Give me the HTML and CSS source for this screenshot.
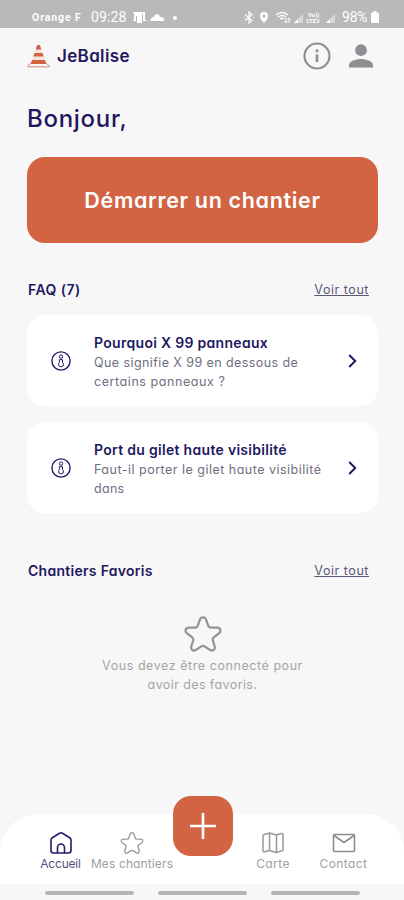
FILE: index.html
```html
<!DOCTYPE html>
<html lang="fr">
<head>
<meta charset="utf-8">
<title>JeBalise</title>
<link rel="stylesheet" href="styles.css">
</head>
<body>
<div class="app">
  <div class="status">
    <span class="carrier">Orange F</span>
    <span class="clock">09:28</span>
    <svg class="st-left" width="48" height="16" viewBox="0 0 48 16" fill="#fff"><path d="M0 3h12v8h1.500v1H10V5H9v9H4V7H3v5H0v-1h1V4H0z"/><path d="M18 12c-1-3 1-4 3-4 1-4 6-3 6 0 3 0 5 2 4 4z"/><circle cx="42" cy="9" r="2"/></svg>
    <svg class="st-right" width="96" height="16" viewBox="0 0 96 16" fill="none" stroke="#fff"><path d="M2 5.500l7 6-3 2.500V3l3 2.500-7 6M1 8.500h1M10 8.500h1" stroke-width="1.200"/><path d="M21 3a4 4 0 0 1 4 4c0 3-4 7-4 7s-4-4-4-7a4 4 0 0 1 4-4zm0 2.500a1.600 1.600 0 1 0 .1 0z" fill="#fff" fill-rule="evenodd" stroke="none"/><path d="M33 6q6-5 12 0M35 8q4-3 8 0M37 10q2-1.500 4 0" stroke-width="1.500"/><path d="M43 9v5m-1.500-1.500L43 14l1.500-1.500M46 14V9m-1 1.500L46 9l1.500 1.500"/><path d="M51 14l9-9v9zM83 14l9-9v9z" fill="#fff" stroke="none" opacity=".45"/><path d="M51 14l4-4v4zM83 14l4-4v4z" fill="#fff" stroke="none"/><g class="lte"><text x="65" y="8">Vo))</text><text x="63.500" y="14">LTE2</text></g></svg>
    <span class="batt">98%</span>
    <svg class="cell" width="8" height="12" viewBox="0 0 8 12" fill="#fff"><path d="M2.500 0h3v1.500H7q1 0 1 1V11q0 1-1 1H1q-1 0-1-1V2.500q0-1 1-1h1.500z"/></svg>
  </div>
  <header class="top">
    <svg class="cone" width="23" height="24" viewBox="0 0 23 24"><path d="M10 1.500q1.500-1.300 3 0L19.500 20h-16z" fill="#f6e4dc"/><path d="M10 1.500q1.500-1.300 3 0l1.300 4H8.700zM7.500 9h8l1.200 3.500H6.300zM5 16h13l1.300 4H3.700z" fill="#d26341"/><path d="M3.500 19.500L.8 21.800v1h21.400v-1l-2.700-2.300" fill="none" stroke="#cf8a77" stroke-width="1"/></svg>
    <span class="brand">JeBalise</span>
    <svg class="info" width="28" height="28" viewBox="0 0 28 28" fill="none" stroke="#8e8e93"><circle cx="14" cy="14" r="12.500" stroke-width="2.100"/><path d="M14 12.500v7.500M14 7.500v2.700" stroke-width="2.700"/></svg>
    <svg class="user" width="24" height="24" viewBox="0 0 24 24" fill="#8e8e93"><circle cx="12" cy="6.200" r="5.900"/><path d="M0 23.500v-2.300c0-4 7-6.200 12-6.200s12 2.200 12 6.200v2.300z"/></svg>
  </header>
  <main>
    <h1><span class="t-hello">Bonjour,</span></h1>
    <button class="cta"><span class="t-cta">Démarrer un chantier</span></button>
    <div class="section faq"><h2 class="t-faq">FAQ (7)</h2><a class="t-all">Voir tout</a></div>
    <div class="card">
      <svg class="badge" width="20" height="20" viewBox="0 0 20 20" fill="none" stroke="#211b6b"><circle cx="10" cy="10" r="9.100" stroke-width="1.400"/><path d="M8.300 8.700h3.200v3l.8.600v2.500q-2.300 2.200-4.600 0v-2.500l.6-.6z"/><circle cx="10" cy="5.600" r="1.700"/></svg>
      <div class="copy"><h3 class="t-q1">Pourquoi X 99 panneaux</h3><p><span class="t-a1">Que signifie X 99 en dessous de</span><br><span class="t-a2">certains panneaux ?</span></p></div>
      <svg class="chev" width="9" height="14" viewBox="0 0 9 14" fill="none" stroke="#211b5c" stroke-width="2"><path d="M1.200 1l6 6-6 6"/></svg>
    </div>
    <div class="card">
      <svg class="badge" width="20" height="20" viewBox="0 0 20 20" fill="none" stroke="#211b6b"><circle cx="10" cy="10" r="9.100" stroke-width="1.400"/><path d="M8.300 8.700h3.200v3l.8.600v2.500q-2.300 2.200-4.600 0v-2.500l.6-.6z"/><circle cx="10" cy="5.600" r="1.700"/></svg>
      <div class="copy"><h3 class="t-q2">Port du gilet haute visibilité</h3><p><span class="t-b1">Faut-il porter le gilet haute visibilité</span><br><span class="t-b2">dans</span></p></div>
      <svg class="chev" width="9" height="14" viewBox="0 0 9 14" fill="none" stroke="#211b5c" stroke-width="2"><path d="M1.200 1l6 6-6 6"/></svg>
    </div>
    <div class="section fav"><h2 class="t-fav">Chantiers Favoris</h2><a class="t-all">Voir tout</a></div>
    <div class="empty">
      <svg width="38" height="36" viewBox="0 0 38 36" fill="none" stroke="#939398" stroke-width="2.200" stroke-linejoin="round"><path d="M16 3.500Q16.600 1.300 19 1.300T22 3.500L24.300 9.800Q24.900 11.500 26.700 11.600L33.200 11.700Q36 12 36.400 13.900T35.200 17.200L29.800 21.300Q28.300 22.600 28.800 24.300L30.700 30.500Q31.300 32.900 29.700 34T26.200 34L20.600 30.400Q19 29.400 17.400 30.400L11.800 34Q9.900 35.100 8.300 34T7.300 30.500L9.200 24.300Q9.700 22.600 8.200 21.300L2.800 17.200Q1.200 15.800 1.600 13.900T4.800 11.700L11.300 11.600Q13.100 11.500 13.700 9.800Z"/></svg>
      <p><span class="t-e1">Vous devez être connecté pour</span><br><span class="t-e2">avoir des favoris.</span></p>
    </div>
  </main>
  <nav class="tabs">
    <div class="tab on"><svg width="24" height="24" viewBox="0 0 24 24" fill="none" stroke="#211b6b" stroke-width="1.600" stroke-linejoin="round"><path d="M2 9q0-1.500 1.300-2.300l7.200-4.500q1.500-.9 3 0l7.200 4.500Q22 7.500 22 9v10.500q0 2.500-2.500 2.500h-15Q2 22 2 19.500zM8.500 22v-5.500a3.500 3.500 0 0 1 7 0V22"/></svg><span class="t-n1">Accueil</span></div>
    <div class="tab mid"><svg width="24" height="24" viewBox="-.5 -1 39 38" fill="none" stroke="#999" stroke-width="2.200" stroke-linejoin="round"><path d="M16 3.500Q16.600 1.300 19 1.300T22 3.500L24.300 9.800Q24.900 11.500 26.700 11.600L33.200 11.700Q36 12 36.400 13.900T35.200 17.200L29.800 21.300Q28.300 22.600 28.800 24.300L30.700 30.500Q31.300 32.900 29.700 34T26.200 34L20.600 30.400Q19 29.400 17.400 30.400L11.800 34Q9.900 35.100 8.300 34T7.300 30.500L9.200 24.300Q9.700 22.600 8.200 21.300L2.800 17.200Q1.200 15.800 1.600 13.900T4.800 11.700L11.300 11.600Q13.100 11.500 13.700 9.800Z"/></svg><span class="t-n2">Mes chantiers</span></div>
    <div class="fab"><svg width="26" height="26" viewBox="0 0 26 26" stroke="#fff" stroke-width="2.600"><path d="M13 0v26M0 13h26"/></svg></div>
    <div class="tab"><svg width="24" height="24" viewBox="0 0 24 24" fill="none" stroke="#999" stroke-width="1.500" stroke-linejoin="round"><path d="M3.300 3.500L8.500 2l7 2 4.800-1.500q1.700-.3 1.700 1.300v14.700q0 1-1 1.300L15.500 21.500l-7-2-4.800 1.300Q2 21 2 19.400V5q0-1.100 1.300-1.500zM8.500 2v17.500M15.500 4v17.500"/></svg><span class="t-n3">Carte</span></div>
    <div class="tab"><svg width="24" height="24" viewBox="0 0 24 24" fill="none" stroke="#8d8d8d" stroke-width="1.600" stroke-linejoin="round"><rect x="1.500" y="3.500" width="21" height="17" rx="1.200"/><path d="M2 4.500l10 7 10-7"/></svg><span class="t-n4">Contact</span></div>
  </nav>
  <div class="sys"><i></i><i></i><i></i></div>
</div>
</body>
</html>
```
FILE: styles.css
```css
* { box-sizing: border-box; margin: 0; padding: 0; }
body { background: #f7f7f7; font-family: Inter, "Open Sans", sans-serif; font-feature-settings: "cv11"; color: #1f195f; }
svg { display: block; flex: none; }
span, a, h2, h3 { white-space: nowrap; }
.app { width: 404px; height: 900px; display: flex; flex-direction: column; overflow: hidden; }
.status { height: 28px; background: #b9b9b9; color: #fff; display: flex; align-items: center; padding: 6px 25px 0 32px; }
.carrier { width: 59px; font: 700 10.500px Roboto, sans-serif; letter-spacing: .9px; }
.clock { width: 42px; font: 400 14px Roboto, sans-serif; letter-spacing: .1px; }
.st-right { margin-left: auto; }
.lte text { font: 700 6px Roboto, sans-serif; fill: #fff; stroke: none; }
.batt { width: 29px; margin-left: 3px; font: 400 14px Roboto, sans-serif; letter-spacing: -.2px; }
.top { height: 56px; display: flex; align-items: center; padding: 0 31px 0 27px; }
.brand { margin-left: 7px; font-size: 17px; font-weight: 600; letter-spacing: .35px; }
.info { margin-left: auto; margin-right: 18px; }
main { flex: 1; padding: 0 26px 0 27px; }
h1 { height: 73px; padding-top: 20px; line-height: 30px; font-size: 24px; font-weight: 500; letter-spacing: .72px; }
.cta { display: flex; align-items: center; justify-content: center; width: 100%; height: 86px; border: 0; border-radius: 18px; background: #d26444; color: #fff; font: 600 21.500px Inter, sans-serif; font-feature-settings: "cv11"; letter-spacing: .67px; }
.section { display: flex; justify-content: space-between; align-items: center; height: 24px; padding: 0 9px 0 1px; }
.faq { margin: 34px 0 14px; }
.fav { margin-top: 45px; }
h2 { font-size: 14px; font-weight: 600; }
a { font-size: 12.500px; color: #5c5879; text-decoration: underline; text-underline-offset: 1px; text-decoration-thickness: 1px; letter-spacing: .55px; }
.t-faq { letter-spacing: .45px; }
.t-fav { letter-spacing: .28px; }
.card { display: flex; align-items: center; height: 91px; margin-bottom: 16px; padding: 0 21px 0 24px; background: #fff; border-radius: 18px; }
.copy { flex: 1; margin-left: 23px; padding-top: 1px; }
h3 { font-size: 14px; font-weight: 600; line-height: 21px; letter-spacing: .3px; }
.copy p { font-size: 12.500px; line-height: 19px; color: #706e7f; }
.t-a1 { letter-spacing: .42px; }
.t-a2 { letter-spacing: .57px; }
.t-b1 { letter-spacing: .49px; }
.t-b2 { letter-spacing: .3px; }
.empty { display: flex; flex-direction: column; align-items: center; padding-top: 34px; text-align: center; }
.empty p { margin-top: 4px; font-size: 12.500px; line-height: 19px; color: #a5a5a8; }
.t-e1 { letter-spacing: .56px; }
.t-e2 { letter-spacing: .4px; }
.tabs { height: 70px; display: grid; grid-template-columns: 61px 82px 60px 80px 61px; justify-content: start; padding-left: 30px; background: #fff; border-radius: 38px 38px 0 0; }
.tab { display: flex; flex-direction: column; align-items: center; padding-top: 17px; color: #a0a0a0; font-size: 12px; line-height: 18px; }
.on { color: #565080; }
.t-n1 { letter-spacing: -.2px; }
.t-n2 { letter-spacing: .12px; }
.t-n3 { letter-spacing: .4px; }
.t-n4 { letter-spacing: .4px; }
.fab { width: 60px; height: 60px; margin-top: -18px; display: flex; align-items: center; justify-content: center; background: #d26444; border-radius: 18px; }
.sys { height: 16px; display: flex; justify-content: center; gap: 24px; padding-top: 7px; }
.sys i { width: 89px; height: 4px; border-radius: 2px; background: #b5b5b5; }
```
